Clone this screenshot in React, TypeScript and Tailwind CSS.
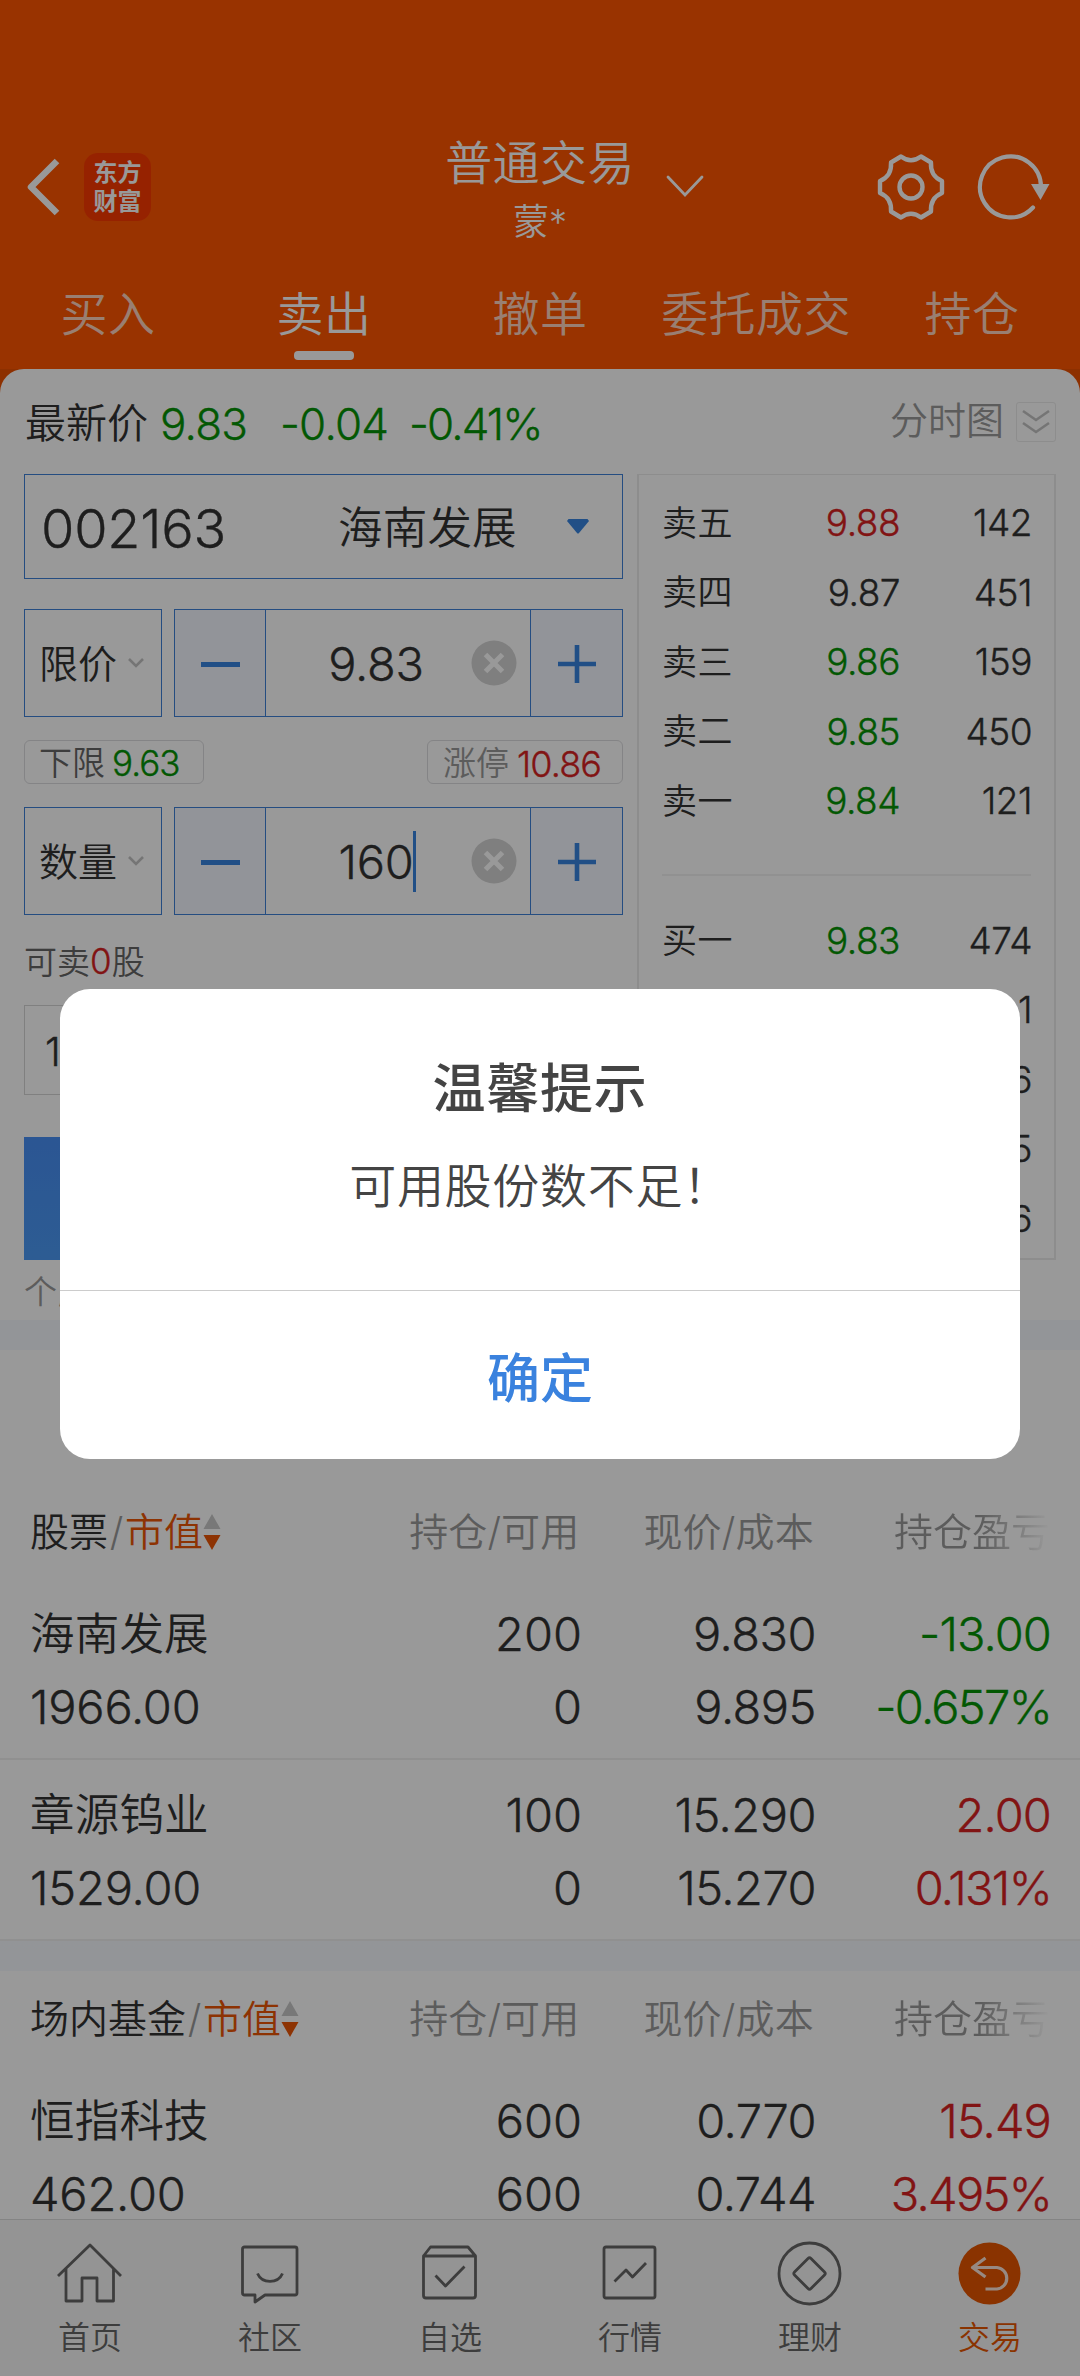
import React from "react";

const GREEN = "text-[#059305] [-webkit-text-stroke:0.35px]";
const RED = "text-[#d82222] [-webkit-text-stroke:0.35px]";
const DARK = "text-[#333] [-webkit-text-stroke:0.35px]";

type Level = { label: string; price: string; qty: string; tone: string };

const asks: Level[] = [
  { label: "卖五", price: "9.88", qty: "142", tone: RED },
  { label: "卖四", price: "9.87", qty: "451", tone: DARK },
  { label: "卖三", price: "9.86", qty: "159", tone: GREEN },
  { label: "卖二", price: "9.85", qty: "450", tone: GREEN },
  { label: "卖一", price: "9.84", qty: "121", tone: GREEN },
];

const bids: Level[] = [
  { label: "买一", price: "9.83", qty: "474", tone: GREEN },
  { label: "", price: "", qty: "1", tone: GREEN },
  { label: "", price: "", qty: "6", tone: GREEN },
  { label: "", price: "", qty: "5", tone: GREEN },
  { label: "", price: "", qty: "6", tone: GREEN },
];

function Header() {
  const tabs = ["买入", "卖出", "撤单", "委托成交", "持仓"];
  return (
    <header className="h-[369px] shrink-0 bg-[#ff5500] pt-[127px] text-white">
      <div className="flex h-[120px] items-center">
        <div className="flex w-[440px] items-center">
          <svg className="ml-[24px] h-[60px] w-[38px]" viewBox="0 0 38 60" fill="none" stroke="currentColor" strokeWidth="6.5" strokeLinecap="butt" strokeLinejoin="round">
            <path d="M33 4 L7 30 L33 56" />
          </svg>
          <div className="ml-[22px] flex h-[68px] w-[67px] flex-col items-center justify-center rounded-[14px] bg-[#fb3a00] font-['Noto_Sans_CJK_SC'] text-[24px] leading-[29px] font-bold">
            <span className="-mt-[4px]">东方</span>
            <span>财富</span>
          </div>
        </div>
        <div className="flex w-[200px] flex-col items-center">
          <div className="text-[47px] leading-[64px] tracking-[0.400px] whitespace-nowrap">普通交易</div>
          <div className="mt-[1px] h-[48px] text-[36px] leading-[52px]">蒙*</div>
        </div>
        <svg className="ml-[25px] h-[26px] w-[40px]" viewBox="0 0 40 26" fill="none" stroke="currentColor" strokeWidth="2.8" strokeLinecap="round">
          <path d="M3 3 L20 21 L37 3" />
        </svg>
        <svg className="ml-[171px] h-[70px] w-[70px]" viewBox="0 0 70 70" fill="none" stroke="currentColor" strokeWidth="4.4" strokeLinejoin="round">
          <path d="M25 4.500 Q35 12 45 4.500 L55 10.500 Q54 24 66 29 V41 Q54 46 55 59.500 L45 65.500 Q35 58 25 65.500 L15 59.500 Q16 46 4 41 V29 Q16 24 15 10.500 Z" />
          <circle cx="35" cy="35" r="11.500" />
        </svg>
        <svg className="ml-[30px] h-[70px] w-[80px]" viewBox="0 0 80 70" fill="none" stroke="currentColor" strokeWidth="4.200" strokeLinecap="round">
          <path d="M65 35 A30.500 30.500 0 1 0 57 55.500" />
          <path d="M55 32 H73.500 L64.500 48 Z" fill="currentColor" stroke="none" />
        </svg>
      </div>
      <nav className="mt-[34px] grid h-[88px] grid-cols-5">
        {tabs.map((t) => (
          <div key={t} className="flex flex-col items-center">
            <span className={t === "卖出" ? "text-[47px] leading-[65px] tracking-[0.400px]" : "text-[47px] leading-[65px] tracking-[0.400px] text-white/75"}>{t}</span>
            {t === "卖出" && <span className="mt-[5px] h-[9px] w-[60px] rounded-[4px] bg-white" />}
          </div>
        ))}
      </nav>
    </header>
  );
}

function Stepper({ label, value, caret }: { label: string; value: string; caret?: boolean }) {
  return (
    <div className="flex h-[108px] gap-[12px]">
      <div className="flex w-[138px] items-center border border-[#3f80d8] pt-[2px] pl-[14px] text-[39px] text-[#333]">
        {label}
        <svg className="mt-[-4px] ml-[10px] h-[11px] w-[18px]" viewBox="0 0 18 11" fill="none" stroke="#c4c4c4" strokeWidth="2.600">
          <path d="M2 2 L9 9 L16 2" />
        </svg>
      </div>
      <div className="flex w-[449px] border border-[#3f80d8]">
        <div className="flex w-[91px] items-center justify-center border-r border-[#3f80d8] bg-[#f3f7ff]">
          <span className="mt-[3px] h-[5px] w-[39px] bg-[#3784e0]" />
        </div>
        <div className="relative flex flex-1 items-center justify-center pr-[44px]">
          <div className={"flex w-[140px] items-center justify-center text-[47px] tracking-[-0.300px] " + DARK}>
            <span className="pt-[3px]">{value}</span>
            {caret && <span className="-mr-[3px] h-[61px] w-[3px] bg-[#3784e0]" />}
          </div>
          <svg className="absolute top-[30px] left-[205px] h-[46px] w-[46px]" viewBox="0 0 46 46">
            <circle cx="23" cy="23" r="22.500" fill="#d4d4d4" />
            <path d="M14.500 14.500 L31.500 31.500 M31.500 14.500 L14.500 31.500" stroke="#fff" strokeWidth="5" />
          </svg>
        </div>
        <div className="flex w-[92px] items-center justify-center border-l border-[#3f80d8] bg-[#f3f7ff]">
          <svg className="mt-[2px] h-[38px] w-[38px]" viewBox="0 0 38 38" stroke="#3784e0" strokeWidth="4.600">
            <path d="M0 19 H38 M19 0 V38" />
          </svg>
        </div>
      </div>
    </div>
  );
}

function BookRow({ row }: { row: Level }) {
  return (
    <div className="flex h-[69.500px] items-center text-[37px]">
      <span className="w-[90px] text-[35px] tracking-[0.500px] text-[#333]">{row.label}</span>
      <span className={"w-[148px] text-right tracking-[-0.500px] " + row.tone}>{row.price}</span>
      <span className={"-mr-px flex-1 text-right tracking-[-0.500px] " + DARK}>{row.qty}</span>
    </div>
  );
}

function TradePanel() {
  return (
    <section className="h-[981px] shrink-0 border-b-[30px] border-[#f5f8fd] bg-white">
      <div className="flex h-[105px] items-center pt-[5px] pr-[24px] pl-[25px]">
        <span className="w-[135px] text-[41px] text-[#333]">最新价</span>
        <span className={"w-[120px] text-[44px] tracking-[-0.800px] " + GREEN}>9.83</span>
        <span className={"w-[129px] text-[44px] tracking-[-0.800px] " + GREEN}>-0.04</span>
        <span className={"text-[44px] tracking-[-1.900px] " + GREEN}>-0.41%</span>
        <span className="mt-[-7px] ml-auto text-[38px] text-[#999]">分时图</span>
        <div className="mt-[-4px] ml-[12px] flex h-[40px] w-[40px] items-center justify-center rounded-[3px] border-[1.500px] border-[#ebebeb]">
          <svg className="h-[26px] w-[30px]" viewBox="0 0 30 26" fill="none" stroke="#c4c4c4" strokeWidth="2.600">
            <path d="M2 2 L15 11 L28 2 M2 14 L15 23 L28 14" />
          </svg>
        </div>
      </div>
      <div className="flex pl-[24px]">
        <div className="w-[599px]">
          <div className="flex h-[105px] items-center border border-[#3f80d8] pt-[4px] pl-[16px]">
            <span className={"w-[297px] text-[54px] tracking-[-0.200px] " + DARK}>002163</span>
            <span className="text-[44.500px] tracking-[0.200px] text-[#333]">海南发展</span>
            <svg className="mt-[-5px] ml-[50px] h-[15px] w-[22px]" viewBox="0 0 22 15" fill="#3784e0">
              <path d="M1.500 0 H20.500 L22 2 L12 14 Q11 15 10 14 L0 2 Z" />
            </svg>
          </div>
          <div className="mt-[30px]">
            <Stepper label="限价" value="9.83" />
          </div>
          <div className="mt-[23px] flex h-[44px] justify-between">
            <div className="flex w-[180px] items-center rounded-[6px] border border-[#dcdcdf] pt-[3px] pl-[14px] text-[33px] text-[#666]">
              下限<span className={"ml-[7px] text-[35px] tracking-[-1px] " + GREEN}>9.63</span>
            </div>
            <div className="flex w-[196px] items-center rounded-[6px] border border-[#dcdcdf] pt-[3px] pl-[15px] text-[33px] text-[#999]">
              涨停<span className={"ml-[8px] text-[36px] tracking-[-0.900px] " + RED}>10.86</span>
            </div>
          </div>
          <div className="mt-[23px]">
            <Stepper label="数量" value="160" caret />
          </div>
          <div className="mt-[21px] h-[51px] text-[33px] leading-[50px] text-[#666]">
            可卖<span className={"text-[35px] " + RED}>0</span>股
          </div>
          <div className={"mt-[18px] flex h-[90px] w-[138px] items-center border border-[#d5d5d5] pt-[3px] pl-[20px] text-[40px] " + DARK}>1</div>
          <div className="mt-[42px] h-[123px] bg-linear-to-b from-[#498ff5] to-[#4b9af5]" />
          <div className="mt-[8px] h-[48px] text-[33px] leading-[48px] tracking-[1px] text-[#999]">个股</div>
        </div>
        <div className="ml-[14px] h-[786px] w-[419px] border-2 border-t border-[#ececec] px-[23px] pt-[13px]">
          {asks.map((r) => (
            <BookRow key={r.label} row={r} />
          ))}
          <div className="mt-[38px] mb-[30px] h-[2px] bg-[#f2f2f2]" />
          {bids.map((r, i) => (
            <BookRow key={i} row={r} />
          ))}
        </div>
      </div>
    </section>
  );
}

type Holding = { name: string; value: string; pos: string; free: string; price: string; cost: string; pl: string; pct: string; tone: string };

const stocks: Holding[] = [
  { name: "海南发展", value: "1966.00", pos: "200", free: "0", price: "9.830", cost: "9.895", pl: "-13.00", pct: "-0.657%", tone: GREEN },
  { name: "章源钨业", value: "1529.00", pos: "100", free: "0", price: "15.290", cost: "15.270", pl: "2.00", pct: "0.131%", tone: RED },
];
const funds: Holding[] = [
  { name: "恒指科技", value: "462.00", pos: "600", free: "600", price: "0.770", cost: "0.744", pl: "15.49", pct: "3.495%", tone: RED },
];

function TableHead({ title }: { title: string }) {
  return (
    <div className="flex h-[60px] items-center pr-[30px] pl-[30px] text-[39px] text-[#999]">
      <div className="flex w-[320px] items-center whitespace-nowrap">
        <span className="text-[#333]">{title}</span>
        <span className="w-[17px] text-center">/</span>
        <span className="text-[#eb5505]">市值</span>
        <svg className="h-[36px] w-[18px]" viewBox="0 0 18 36">
          <path d="M9 0 L17.500 15 H0.500 Z" fill="#c8c8c8" />
          <path d="M9 36 L17.500 21 H0.500 Z" fill="#eb5505" />
        </svg>
      </div>
      <span className="w-[230px] text-right tracking-[0.100px]">持仓/可用</span>
      <span className="w-[235px] text-right tracking-[0.200px]">现价/成本</span>
      <span className="ml-[80px] bg-linear-to-r from-[#999] from-55% to-transparent to-100% bg-clip-text whitespace-nowrap text-transparent">持仓盈亏</span>
    </div>
  );
}

function HoldingRow({ h }: { h: Holding }) {
  const lines = [
    [h.name, h.pos, h.price, h.pl],
    [h.value, h.free, h.cost, h.pct],
  ];
  return (
    <div className="flex h-[181px] flex-col justify-center border-b-2 border-[#f0f0f0] pt-[5px] pl-[30px] text-[47px] text-[#333]">
      {lines.map((l, i) => (
        <div key={i} className="flex h-[73px] items-center">
          <span className={i === 0 ? "w-[320px] text-[44.500px] tracking-[0.200px]" : "w-[320px] tracking-[-0.200px] [-webkit-text-stroke:0.35px]"}>{l[0]}</span>
          <span className="w-[232px] text-right tracking-[0px] [-webkit-text-stroke:0.35px]">{l[1]}</span>
          <span className="w-[234px] text-right tracking-[-0.500px] [-webkit-text-stroke:0.35px]">{l[2]}</span>
          <span className={(i === 0 ? "w-[235px] text-right tracking-[-0.900px] " : "w-[235px] text-right tracking-[-1.700px] ") + h.tone}>{l[3]}</span>
        </div>
      ))}
    </div>
  );
}

const navIcons: { label: string; icon: React.ReactNode }[] = [
  { label: "首页", icon: <path d="M3 36 L35 5 L66 36 M11 28.500 V61 H27 V38 H42 V61 H58.500 V28.500" /> },
  { label: "社区", icon: <path d="M9.500 7 H60 Q62 7 62 9 V53 Q62 55 60 55 H30 L20 62 V55 H9.500 Q7.500 55 7.500 53 V9 Q7.500 7 9.500 7 Z M22.500 33.500 C27 44 43 44 47.500 33.500" /> },
  { label: "自选", icon: <path d="M8.500 16 H60.500 V55.500 Q60.500 58 58 58 H11 Q8.500 58 8.500 55.500 Z L15.500 7 H53 L60.500 16 M20.500 35.500 L30.500 46 L49.500 26.500" /> },
  { label: "行情", icon: <path d="M11 7 H58 Q60 7 60 9 V56 Q60 58 58 58 H11 Q9 58 9 56 V9 Q9 7 11 7 Z M19.500 41.500 L31 30 L37.500 37 L51 23" /> },
  { label: "理财", icon: <><circle cx="34.500" cy="33.500" r="30.500" /><path d="M33 18.500 Q34.500 17 36 18.500 L49.500 32 Q51 33.500 49.500 35 L36 48.500 Q34.500 50 33 48.500 L19.500 35 Q18 33.500 19.500 32 Z" /></> },
  { label: "交易", icon: <><circle cx="34.500" cy="33.500" r="31" fill="#e65500" stroke="none" /><path d="M30.500 18 L17.500 27.500 L30.500 37 M17.500 27.500 H42 A10.800 10.800 0 0 1 42 49 H30.500" stroke="#fff" strokeOpacity="0.85" strokeWidth="3.200" /></> },
];

function BottomNav() {
  return (
    <nav className="absolute inset-x-0 bottom-0 grid h-[157px] grid-cols-6 border-t border-[#dcdcdc] bg-[#f7f7f7]">
      {navIcons.map((n) => (
        <div key={n.label} className={n.label === "交易" ? "flex flex-col items-center pt-[20px] text-[#e65500]" : "flex flex-col items-center pt-[20px] text-[#666]"}>
          <svg className="h-[70px] w-[70px]" viewBox="0 0 70 70" fill="none" stroke="currentColor" strokeWidth="2.800" strokeLinejoin="round">
            {n.icon}
          </svg>
          <span className="mt-[4px] text-[32px] leading-[48px]">{n.label}</span>
        </div>
      ))}
    </nav>
  );
}

export default function App() {
  return (
    <div className="relative flex h-[2376px] w-[1080px] flex-col overflow-hidden bg-white font-[Inter,'Noto_Sans_CJK_SC',sans-serif] font-[350]">
      <Header />
      <div className="shrink-0 bg-[#eb5000]">
        <div className="overflow-hidden rounded-t-[24px]">
          <TradePanel />
        </div>
      </div>
      <section className="shrink-0 pt-[152px]">
        <TableHead title="股票" />
        <div className="h-[17px]" />
        {stocks.map((h) => (
          <HoldingRow key={h.name} h={h} />
        ))}
        <div className="h-[30px] bg-[#f5f8fd]" />
      </section>
      <section className="shrink-0 pt-[18px]">
        <TableHead title="场内基金" />
        <div className="h-[17px]" />
        {funds.map((h) => (
          <HoldingRow key={h.name} h={h} />
        ))}
      </section>
      <BottomNav />
      <div className="absolute inset-0 bg-black/40">
        <div role="dialog" className="absolute top-[989px] left-[60px] flex h-[470px] w-[960px] flex-col items-center rounded-[30px] bg-white">
          <h2 className="mt-[63px] text-[53px] leading-[74px] font-medium tracking-[0.800px] text-[#444]">温馨提示</h2>
          <p className="mt-[27px] text-[47px] leading-[66px] tracking-[0.700px] text-[#444]">可用股份数不足！</p>
          <button className="mt-auto h-[169px] w-full border-t border-[#ccc] pt-[9px] text-[53px] font-medium text-[#3a82de]">确定</button>
        </div>
      </div>
    </div>
  );
}
